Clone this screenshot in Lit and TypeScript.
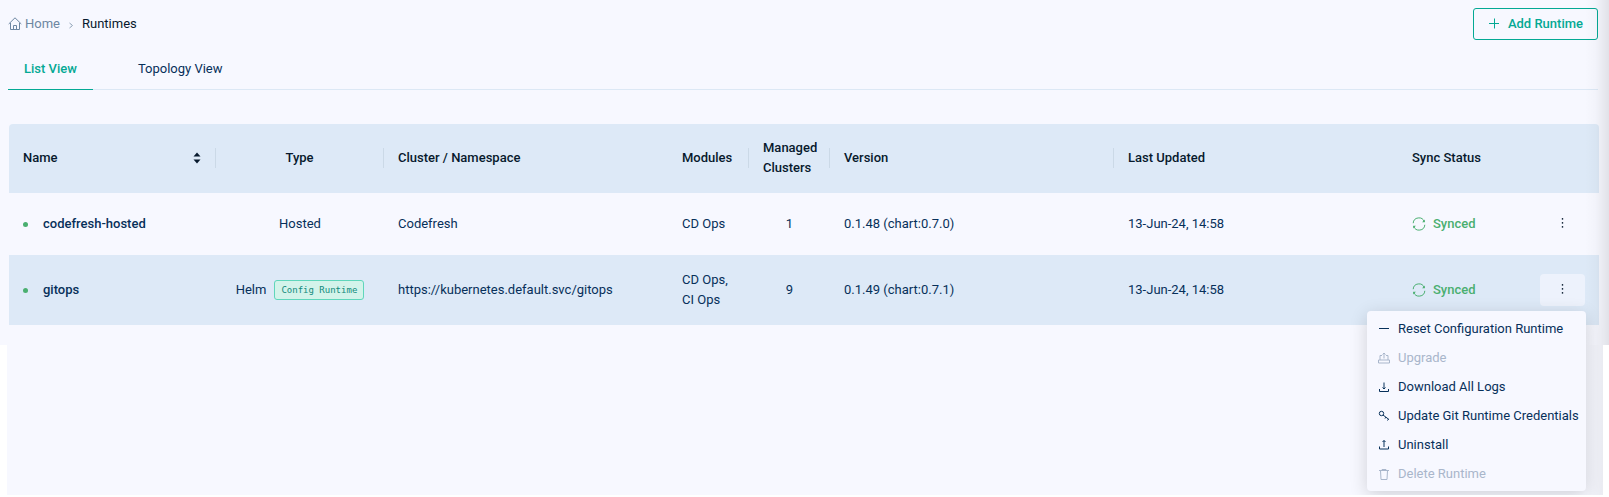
import { LitElement, html, css, svg } from "lit";
import { customElement, state } from "lit/decorators.js";
import { classMap } from "lit/directives/class-map.js";

interface Runtime {
  name: string;
  type: string;
  config?: boolean;
  cluster: string;
  modules: string;
  managed: number;
  version: string;
  updated: string;
}

const runtimes: Runtime[] = [
  { name: "codefresh-hosted", type: "Hosted", cluster: "Codefresh", modules: "CD Ops", managed: 1, version: "0.1.48 (chart:0.7.0)", updated: "13-Jun-24, 14:58" },
  { name: "gitops", type: "Helm", config: true, cluster: "https://kubernetes.default.svc/gitops", modules: "CD Ops, CI Ops", managed: 9, version: "0.1.49 (chart:0.7.1)", updated: "13-Jun-24, 14:58" },
];

const icons = {
  reset: svg`<path d="M1 5.500h10"/>`,
  upgrade: svg`<path d="M4 3.500H2v4.500M8 3.500h2v4.500M0.500 8h11v3h-11zM6 6.500V1M4.500 2.500L6 1l1.500 1.500"/>`,
  download: svg`<path d="M1.500 8v2.500h9V8M6 1.500V8M4.500 6.500L6 8l1.500-1.500"/>`,
  key: svg`<circle cx="3.500" cy="3.500" r="2.200"/><path d="M5 5l6 4.500M8 7l-1 1.500M10.500 9l-1 1.500"/>`,
  uninstall: svg`<path d="M1.500 7.500V10h9V7.500M6 8V1.500M4.500 3L6 1.500 7.500 3"/>`,
  remove: svg`<path d="M1 2.500h10M4 2.500v-1h4v1M2.500 2.500l0.500 9h6l0.500-9"/>`,
};

const actions: { label: string; icon: keyof typeof icons; disabled?: boolean }[] = [
  { label: "Reset Configuration Runtime", icon: "reset" },
  { label: "Upgrade", icon: "upgrade", disabled: true },
  { label: "Download All Logs", icon: "download" },
  { label: "Update Git Runtime Credentials", icon: "key" },
  { label: "Uninstall", icon: "uninstall" },
  { label: "Delete Runtime", icon: "remove", disabled: true },
];

@customElement("runtime-menu")
export class RuntimeMenu extends LitElement {
  static styles = css`
    :host { display: block; }
    .menu {
      display: flex;
      flex-direction: column;
      padding: 3px 0;
      border-radius: 4px;
      background: #f7f8ff;
      box-shadow: 0 4px 18px rgba(0, 0, 0, 0.16);
    }
    .item {
      display: flex;
      align-items: center;
      gap: 8px;
      height: 29px;
      padding: 0 11px;
      border: 0;
      background: none;
      color: #07305a;
      font: 400 13px/20px Roboto, sans-serif;
      white-space: nowrap;
    }
    .item:disabled { color: #a9b6cb; }
    .icon {
      flex: none;
      width: 12px;
      height: 12px;
      fill: none;
      stroke: currentColor;
    }
  `;

  render() {
    return html`<div class="menu" role="menu">
      ${actions.map(
        (a) => html`<button class="item" role="menuitem" ?disabled=${a.disabled}>
          <svg class="icon" viewBox="0 0 12 12" aria-hidden="true">${icons[a.icon]}</svg>${a.label}
        </button>`,
      )}
    </div>`;
  }
}

@customElement("app-root")
export class AppRoot extends LitElement {
  @state() private open = "gitops";
  @state() private tab = "List View";

  static styles = css`
    :host {
      display: block;
      color: #07305a;
      font: 400 13px/20px Roboto, sans-serif;
    }
    .page {
      position: relative;
      padding: 8px 10px 20px 8px;
      background: #f7f8ff;
    }
    .page::after {
      content: "";
      position: absolute;
      top: 0;
      right: 0;
      bottom: 0;
      width: 24px;
      background: linear-gradient(90deg, rgba(0, 0, 0, 0), rgba(0, 0, 0, 0.02) 45%, rgba(0, 0, 0, 0.09));
      pointer-events: none;
    }
    .below {
      height: 150px;
      margin: 0 6px 0 7px;
      background: linear-gradient(270deg, rgba(0, 0, 0, 0.05), rgba(0, 0, 0, 0) 18px) #f7f8ff;
    }
    .top {
      display: flex;
      align-items: center;
      justify-content: space-between;
      padding-right: 1px;
    }
    .crumbs {
      display: flex;
      align-items: center;
      gap: 8px;
      color: #07192d;
    }
    .home {
      display: flex;
      align-items: center;
      gap: 3px;
      color: #6d87a2;
      text-decoration: none;
    }
    .line { fill: none; stroke: currentColor; }
    .chevron { color: #8fa3b8; }
    .add {
      display: flex;
      align-items: center;
      gap: 8px;
      height: 32px;
      padding: 0 14px;
      border: 1px solid #04a994;
      border-radius: 3px;
      background: none;
      color: #04a994;
      font: 500 13px/20px Roboto, sans-serif;
    }
    .tabs {
      display: flex;
      gap: 29px;
      height: 49px;
      margin-right: 1px;
      border-bottom: 1px solid #dce8f5;
    }
    .tab {
      height: 50px;
      padding: 8px 16px 0;
      border: 0;
      border-bottom: 1px solid transparent;
      background: none;
      color: #07305a;
      font: 400 13px/20px Roboto, sans-serif;
    }
    .tab.active {
      border-color: #04a994;
      color: #04a994;
      font-weight: 500;
    }
    .grid {
      width: calc(100% - 1px);
      margin: 34px 0 0 1px;
      border-spacing: 0;
      table-layout: fixed;
    }
    .c-name { width: 207px; }
    .c-type { width: 168px; }
    .c-small { width: 81px; }
    .c-sync { width: 128px; }
    .c-menu { width: 73px; }
    .head {
      height: 67px;
      padding: 0 0 2px;
      background: #dde9f7;
      color: #07192d;
      font-weight: 500;
      text-align: left;
    }
    .head:first-child { border-top-left-radius: 4px; }
    .head:last-child { border-top-right-radius: 4px; }
    .label {
      display: flex;
      align-items: center;
      justify-content: space-between;
      height: 20px;
      padding: 0 14px;
    }
    .label.rule { border-right: 1px solid #cbd9e7; }
    .label.center { justify-content: center; }
    .cell {
      height: 62px;
      padding: 0 14px;
    }
    .cell.center { text-align: center; }
    .selected .cell {
      height: 70px;
      background: #dde9f7;
    }
    .name, .type, .sync {
      display: flex;
      align-items: center;
    }
    .name { gap: 15px; font-weight: 500; }
    .dot {
      width: 5px;
      height: 5px;
      border-radius: 50%;
      background: #4aaf70;
    }
    .type { justify-content: center; gap: 8px; }
    .badge {
      padding: 0 6px;
      border: 1px solid #5fd6bb;
      border-radius: 3px;
      background: #d3f3ea;
      color: #128a7c;
      font: 400 9px/18px "DejaVu Sans Mono", monospace;
      white-space: nowrap;
    }
    .sync { gap: 7px; color: #4aaf70; font-weight: 500; }
    .anchor { position: relative; }
    .more {
      display: flex;
      align-items: center;
      justify-content: center;
      width: 45px;
      height: 32px;
      padding: 0;
      border: 0;
      border-radius: 4px;
      background: none;
      color: #07192d;
    }
    .more.on { background: #edf2fc; }
    .popup {
      position: absolute;
      z-index: 2;
      top: 37px;
      right: -1px;
      width: 219px;
    }
  `;

  private head(text: unknown, rule = false, center = false) {
    return html`<th class="head" scope="col">
      <div class=${classMap({ label: true, rule, center })}>${text}</div>
    </th>`;
  }

  private row(r: Runtime) {
    const on = this.open === r.name;
    return html`<tr class=${classMap({ selected: !!r.config })}>
      <td class="cell"><div class="name"><span class="dot"></span>${r.name}</div></td>
      <td class="cell"><div class="type">${r.type}${r.config ? html`<span class="badge">Config Runtime</span>` : ""}</div></td>
      <td class="cell">${r.cluster}</td>
      <td class="cell">${r.modules}</td>
      <td class="cell center">${r.managed}</td>
      <td class="cell">${r.version}</td>
      <td class="cell">${r.updated}</td>
      <td class="cell">
        <div class="sync">
          <svg class="line" width="14" height="14" viewBox="0 0 14 14" aria-hidden="true">
            <path d="M1.200 6.200A5.700 5.700 0 0 1 12.300 4.800M12.800 7.800A5.700 5.700 0 0 1 1.700 9.200"/>
            <path d="M12.800 2.500v2.700h-2.700zM1.200 11.500V8.800h2.700z" fill="currentColor" stroke="none"/>
          </svg>Synced
        </div>
      </td>
      <td class="cell">
        <div class="anchor">
          <button class=${classMap({ more: true, on })} aria-label="Actions for ${r.name}" @click=${() => (this.open = on ? "" : r.name)}>
            <svg width="3" height="12" viewBox="0 0 3 12" fill="currentColor" aria-hidden="true">
              <circle cx="1.500" cy="0.900" r="0.800"/><circle cx="1.500" cy="4.900" r="0.800"/><circle cx="1.500" cy="8.900" r="0.800"/>
            </svg>
          </button>
          ${on ? html`<runtime-menu class="popup"></runtime-menu>` : ""}
        </div>
      </td>
    </tr>`;
  }

  render() {
    return html`
      <main class="page">
        <div class="top">
          <nav class="crumbs" aria-label="Breadcrumb">
            <a class="home" href="#">
              <svg class="line" width="14" height="14" viewBox="0 0 14 14" aria-hidden="true">
                <path d="M0.700 7L7 0.800l6.300 6.200M2.500 6v6.500h9V6M5.500 12.500v-4h3v4"/>
              </svg>Home</a>
            <svg class="line chevron" width="6" height="10" viewBox="0 0 6 10" aria-hidden="true"><path d="M1.500 4l3 2.500-3 2.500"/></svg>
            <span>Runtimes</span>
          </nav>
          <button class="add">
            <svg class="line" width="12" height="12" viewBox="0 0 12 12" aria-hidden="true"><path d="M1 5.500h10M6.500 0.500v10"/></svg>
            Add Runtime
          </button>
        </div>
        <div class="tabs" role="tablist">
          ${["List View", "Topology View"].map(
            (t) => html`<button class=${classMap({ tab: true, active: this.tab === t })} role="tab" aria-selected=${this.tab === t} @click=${() => (this.tab = t)}>${t}</button>`,
          )}
        </div>
        <table class="grid">
          <colgroup>
            <col class="c-name" /><col class="c-type" /><col /><col class="c-small" /><col class="c-small" />
            <col /><col /><col class="c-sync" /><col class="c-menu" />
          </colgroup>
          <thead>
            <tr>
              ${this.head(html`Name<svg width="8" height="12" viewBox="0 0 8 12" fill="currentColor" aria-hidden="true"><path d="M4 0.500L7.500 4.500h-7zM4 11.500L0.500 7.500h7z"/></svg>`, true)}
              ${this.head("Type", true, true)}
              ${this.head("Cluster / Namespace")}
              ${this.head("Modules", true)}
              ${this.head("Managed Clusters", true)}
              ${this.head("Version", true)}
              ${this.head("Last Updated")}
              ${this.head("Sync Status")}
              ${this.head("")}
            </tr>
          </thead>
          <tbody>${runtimes.map((r) => this.row(r))}</tbody>
        </table>
      </main>
      <div class="below"></div>
    `;
  }
}
